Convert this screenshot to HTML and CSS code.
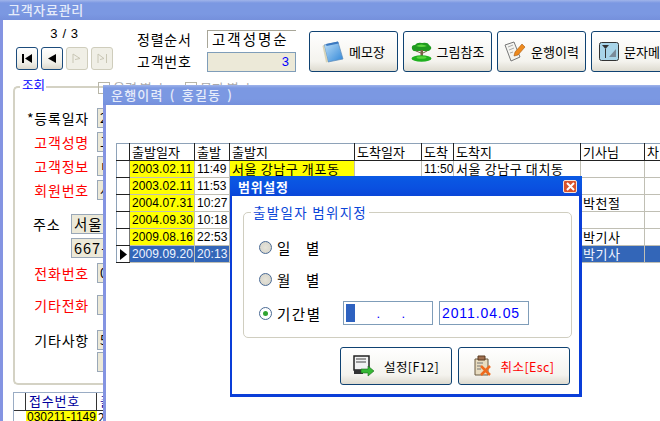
FILE: index.html
```html
<!DOCTYPE html>
<html>
<head>
	<meta charset="utf-8">
	<title>고객자료관리</title>
	<link rel="stylesheet" href="styles.css">
</head>
<body>
<div class="desk">
	<div class="main-win">
		<div class="titlebar main-title">고객자료관리</div>
		<div class="toolbar">
			<div class="nav">
				<div class="nav-count">3 / 3</div>
				<div class="nav-btns">
					<div class="nav-btn"><svg width="11" height="9" viewBox="0 0 11 9"><path d="M0 0h2v9H0zM10 0v9L3 4.500z" fill="#000"/></svg></div>
					<div class="nav-btn"><svg width="8" height="9" viewBox="0 0 8 9"><path d="M8 0v9L0 4.500z" fill="#000"/></svg></div>
					<div class="nav-btn off"><svg width="10" height="11" viewBox="0 0 10 11"><path d="M1 1v9M1 1l7 4.500-5 1" fill="none" stroke="#c8c6b4"/></svg></div>
					<div class="nav-btn off"><svg width="11" height="11" viewBox="0 0 11 11"><path d="M1 1v9M1 1l6 4.500-4 1M9.500 1v9" fill="none" stroke="#c8c6b4"/></svg></div>
				</div>
			</div>
			<div class="sort">
				<div class="sort-row"><span>정렬순서</span><div class="sort-val">고객성명순</div></div>
				<div class="sort-row"><span>고객번호</span><div class="sort-no">3</div></div>
			</div>
			<div class="tools">
				<div class="tool">
					<svg width="22" height="24" viewBox="0 0 22 24"><defs><linearGradient id="memo" x1="0" y1="0" x2="1" y2="1"><stop offset="0" stop-color="#bfe0f8"/><stop offset="1" stop-color="#2f86d8"/></linearGradient></defs><path d="M2 5l14-3 5 17-15 3z" fill="url(#memo)" stroke="#5c8ab8" stroke-width=".7"/><path d="M2 5l4 17-2 .5L0.500 6z" fill="#d8d4b8"/><path d="M4 4l12-2.500.6 2L4.500 6z" fill="#3a78c0"/></svg>
					<span>메모장</span>
				</div>
				<div class="tool">
					<svg width="21" height="20" viewBox="0 0 21 20"><path d="M1 7Q0 3 4 3 6 0 11 1q6-1 7 2 3 2 2 4-2 3-6 2H6Q2 10 1 7z" fill="#1f9a1f"/><path d="M5 4q5-3 11 0-5 2-11 0z" fill="#5ed640"/><path d="M9.500 8h2.500v7h-2.500z" fill="#7a6248"/><path d="M5 9l5 2M16 9l-4 2" stroke="#7a6248"/><ellipse cx="10.500" cy="16.500" rx="10" ry="3.300" fill="#20b020"/><ellipse cx="10.500" cy="15.500" rx="5" ry="1.300" fill="#58d83c"/></svg>
					<span>그림참조</span>
				</div>
				<div class="tool">
					<svg width="22" height="22" viewBox="0 0 22 22"><path d="M1 4l9-3 6 15-9 4z" fill="#f4f4f0" stroke="#777"/><path d="M4 6l5-2M5 9l5-2M6 12l3-1" stroke="#aaa"/><path d="M11 11l7-8 3 3-7 8-4 1z" fill="#ee8a1e" stroke="#a85a10" stroke-width=".6"/></svg>
					<span>운행이력</span>
				</div>
				<div class="tool tool-cut">
					<svg width="20" height="20" viewBox="0 0 20 20"><rect x=".5" y=".5" width="19" height="18" rx="2" fill="#a8d4e8" stroke="#333"/><path d="M3 3h7L6.500 7z M6 7h1v9H6z" fill="#333"/><path d="M10 15l7-8v8z" fill="#7a8a98"/></svg>
					<span>문자메</span>
				</div>
			</div>
		</div>
		<div class="search">
			<div class="search-top">
				<span class="legend">조회</span>
				<span class="chk"></span><span class="chk-text">음력 별 ㅣ</span>
				<span class="chk"></span><span class="chk-text">문자 별 ㅣ</span>
			</div>
			<div class="form">
				<div class="frow"><label class="lbl">*등록일자</label><span class="inp">2</span></div>
				<div class="frow"><label class="lbl red">고객성명</label><span class="inp">고</span></div>
				<div class="frow"><label class="lbl red">고객정보</label><span class="inp">ㅂ</span></div>
				<div class="frow"><label class="lbl red">회원번호</label><span class="inp">사</span></div>
				<div class="addr">
					<label class="lbl-addr">주소</label>
					<div class="addr-vals">
						<span class="inp wide">서울</span>
						<span class="inp wide">667-</span>
					</div>
				</div>
				<div class="frow r2"><label class="lbl red">전화번호</label><span class="inp">0</span></div>
				<div class="frow r3"><label class="lbl red">기타전화</label><span class="inp"></span></div>
				<div class="frow r4"><label class="lbl">기타사항</label><span class="inp">5</span></div>
				<div class="frow r5"><label class="lbl"></label><span class="inp"></span></div>
			</div>
		</div>
		<div class="mini-grid">
			<div class="mini-ind"></div>
			<div class="mini-col"><div class="mini-h">접수번호</div><div class="mini-c">030211-1149</div></div>
			<div class="mini-col2"><div class="mini-h">출</div><div class="mini-d">2</div></div>
		</div>
	</div>

	<div class="trip-win">
		<div class="titlebar trip-title">운행이력 ( 홍길동 )</div>
		<table class="grid">
			<colgroup>
				<col class="c0"><col class="c1"><col class="c2"><col class="c3"><col class="c4"><col class="c5"><col class="c6"><col class="c7"><col class="c8">
			</colgroup>
			<tr><th></th><th>출발일자</th><th>출발</th><th>출발지</th><th>도착일자</th><th>도착</th><th>도착지</th><th>기사님</th><th>차</th></tr>
			<tr><td class="ind"></td><td class="yel">2003.02.11</td><td>11:49</td><td class="yel kor">서울 강남구 개포동</td><td></td><td>11:50</td><td class="kor">서울 강남구 대치동</td><td></td><td></td></tr>
			<tr><td class="ind"></td><td class="yel">2003.02.11</td><td>11:53</td><td></td><td></td><td></td><td></td><td></td><td></td></tr>
			<tr><td class="ind"></td><td class="yel">2004.07.31</td><td>10:27</td><td></td><td></td><td></td><td></td><td class="kor">박천절</td><td></td></tr>
			<tr><td class="ind"></td><td class="yel">2004.09.30</td><td>10:18</td><td></td><td></td><td></td><td></td><td></td><td></td></tr>
			<tr><td class="ind"></td><td class="yel">2009.08.16</td><td>22:53</td><td></td><td></td><td></td><td></td><td class="kor">박기사</td><td></td></tr>
			<tr class="sel"><td class="ind"><svg width="7" height="11" viewBox="0 0 7 11"><path d="M0 0l7 5.500L0 11z" fill="#000"/></svg></td><td>2009.09.20</td><td>20:13</td><td></td><td></td><td></td><td></td><td class="kor">박기사</td><td></td></tr>
		</table>
	</div>

	<div class="dialog">
		<div class="dlg-title">
			<span>범위설정</span>
			<span class="dlg-close"><svg width="9" height="9" viewBox="0 0 9 9"><path d="M1 1l7 7M8 1L1 8" stroke="#fff" stroke-width="2"/></svg></span>
		</div>
		<div class="dlg-body">
			<div class="range">
				<span class="range-legend">출발일자 범위지정</span>
				<div class="opt"><span class="radio"></span><span class="opt-text">일&nbsp;&nbsp;&nbsp;별</span></div>
				<div class="opt"><span class="radio"></span><span class="opt-text">월&nbsp;&nbsp;&nbsp;별</span></div>
				<div class="opt opt-last">
					<span class="radio on"></span><span class="opt-text">기간별</span>
					<div class="date-from"><span class="caret"></span><span class="dots">.</span><span class="dots">.</span></div>
					<div class="date-to">2011.04.05</div>
				</div>
			</div>
			<div class="dlg-btns">
				<div class="dlg-btn">
					<svg width="22" height="22" viewBox="0 0 22 22"><path d="M1 1h15v14H1z" fill="#f2f2f2" stroke="#222" stroke-width="1.500"/><path d="M3 4h10M3 7h10" stroke="#444"/><path d="M1 15h9v4H1z" fill="#333"/><path d="M8 14h7v-3l6 5-6 5v-3H8z" fill="#35b835" stroke="#1a6a1a" stroke-width=".6"/></svg>
					<span>설정[F12]</span>
				</div>
				<div class="dlg-btn cancel">
					<svg width="18" height="22" viewBox="0 0 18 22"><path d="M1 4h13v16H1z" fill="#e8dcc0" stroke="#6a5a40"/><path d="M4 1h7v4H4z" fill="#a07050" stroke="#5a3a20"/><path d="M3 8h6M3 11h4M3 14h4" stroke="#777"/><path d="M7 11l9 9M16 11l-9 9" stroke="#ee6a1e" stroke-width="2.500"/></svg>
					<span>취소[Esc]</span>
				</div>
			</div>
		</div>
	</div>
</div>
</body>
</html>
```

FILE: styles.css
```css
* { box-sizing: border-box; }
html, body { margin: 0; padding: 0; }
body { font-family: "Noto Sans CJK KR", "Liberation Sans", sans-serif; font-size: 13px; color: #000; background: #fff; }
.desk { position: relative; width: 660px; height: 421px; overflow: hidden; }

.titlebar { height: 20px; line-height: 20px; color: #e6ecfa; font-size: 13px; font-weight: 500; letter-spacing: .7px; background: linear-gradient(#a0b4ea 0, #7b98e2 3px, #7b98e2 70%, #7590dc); }

/* main window */
.main-win { width: 660px; height: 421px; border-left: 3px solid #8494e2; }
.main-title { margin-left: -3px; padding-left: 8px; }
.toolbar { display: flex; height: 58px; }
.nav { flex: none; width: 134px; padding: 5px 0 0 13px; }
.nav-count { text-align: center; width: 97px; height: 22px; line-height: 18px; font-size: 13px; letter-spacing: .6px; font-family: "Liberation Sans", sans-serif; }
.nav-btns { display: flex; gap: 3px; }
.nav-btn { width: 22px; height: 23px; display: flex; align-items: center; justify-content: center; border: 1px solid #1c4c7c; border-radius: 3px; background: linear-gradient(#fff, #f0efe8 70%, #dcd8cc); }
.nav-btn.off { border-color: #cfcdbc; background: #f0efe6; }
.sort { flex: none; width: 172px; padding-top: 8px; }
.sort-row { display: flex; align-items: center; height: 22px; }
.sort-row span { flex: none; width: 70px; font-size: 14px; letter-spacing: .8px; }
.sort-val { width: 89px; height: 18px; line-height: 16px; border-top: 1px solid #a8a698; border-left: 1px solid #a8a698; padding-left: 4px; font-size: 14.500px; letter-spacing: 2px; white-space: nowrap; }
.sort-no { width: 89px; height: 20px; margin-top: 2px; line-height: 18px; border: 1px solid #7f9db9; background: #ece9d8; color: #00f; text-align: right; padding-right: 6px; font-family: "Liberation Sans", sans-serif; font-size: 13px; }
.tools { display: flex; gap: 5px; padding-top: 11px; }
.tool { flex: none; width: 89px; height: 41px; display: flex; align-items: center; justify-content: center; gap: 5px; border: 1px solid #0f4272; border-radius: 3px; background: linear-gradient(#fff, #f4f3ee 75%, #dedbd0); font-size: 13px; white-space: nowrap; }
.tool-cut { justify-content: flex-start; padding-left: 7px; }

/* search group */
.search { margin-left: 10px; }
.search-top { height: 14px; display: flex; align-items: center; font-size: 13px; color: #aaa; white-space: nowrap; }
.legend { flex: none; width: 26px; margin: 0 52px 0 7px; padding-left: 2px; background: #fff; color: #00f; font-size: 12.500px; line-height: 14px; }
.chk { flex: none; width: 12px; height: 12px; margin: 6px 3px 0 0; border: 1px solid #b8b6a8; }
.chk-text { width: 72px; line-height: 14px; padding-top: 6px; }
.form { height: 299px; margin-top: -6px; border: 2px solid #d4d2c4; border-right: 0; border-radius: 5px 0 0 5px; padding-top: 18px; }
.frow { display: flex; align-items: center; height: 24px; }
.lbl { flex: none; width: 82px; text-align: right; padding-right: 8px; font-size: 14px; letter-spacing: .8px; white-space: nowrap; }
.red { color: #f00; }
.inp { display: block; width: 90px; height: 20px; line-height: 18px; padding-left: 2px; border: 1px solid #9aa8b8; background: #ece9d8; font-size: 13px; overflow: hidden; }
.addr { display: flex; margin-top: 12px; height: 44px; }
.lbl-addr { flex: none; width: 56px; padding: 0 0 0 18px; font-size: 14px; letter-spacing: .8px; }
.addr-vals { display: flex; flex-direction: column; gap: 4px; }
.inp.wide { width: 60px; font-size: 14.500px; letter-spacing: 1px; }
.r2 { margin-top: 3px; }
.r3 { margin-top: 10px; height: 20px; }
.r4 { margin-top: 15px; height: 20px; }
.r5 { margin-top: 2px; height: 20px; }

.mini-grid { display: flex; margin: 7px 0 0 10px; height: 30px; border: 1px solid #9aacc4; border-bottom: 0; }
.mini-ind { width: 12px; height: 18px; border-right: 1px solid #333; border-bottom: 1px solid #333; background: #fff; }
.mini-col { flex: none; width: 71px; }
.mini-h { height: 18px; line-height: 16px; padding-left: 3px; color: #00009c; border-bottom: 1px solid #333; border-right: 1px solid #333; font-size: 13px; letter-spacing: .8px; }
.mini-c { height: 12px; line-height: 13px; background: #ff0; padding-left: 1px; font-family: "Liberation Sans", sans-serif; font-size: 12px; }
.mini-col2 { flex: none; width: 30px; }
.mini-d { padding-left: 1px; font-size: 12px; line-height: 12px; }

/* trip window */
.trip-win { position: absolute; left: 103px; top: 85px; width: 600px; height: 360px; background: #fff; border-left: 3px solid #8494e2; }
.trip-title { margin-left: -3px; padding-left: 8px; letter-spacing: 1.2px; word-spacing: 2px; }
.grid { margin: 38px 0 0 10px; border-collapse: collapse; table-layout: fixed; width: 544px; border-top: 1px solid #8ea2b8; border-left: 1px solid #8ea2b8; font-family: "Liberation Sans", "Noto Sans CJK KR", sans-serif; font-size: 12px; }
.grid th, .grid td { height: 17px; padding: 0 0 0 2px; line-height: 14px; white-space: nowrap; overflow: hidden; text-align: left; font-weight: 400; }
.grid th { border-right: 1px solid #222; border-bottom: 1px solid #222; font-size: 13px; font-family: "Noto Sans CJK KR", sans-serif; }
.grid td { border-right: 1px solid #c0bfb4; border-bottom: 1px solid #c0bfb4; letter-spacing: .1px; }
.grid td.kor { font-family: "Noto Sans CJK KR", sans-serif; font-size: 13px; letter-spacing: .6px; }
.grid td.ind { border-right: 1px solid #777; border-bottom: 1px solid #222; background: #fff; padding: 0 0 0 3px; line-height: 0; }
.c0 { width: 13px; } .c1 { width: 65px; } .c2 { width: 35px; } .c3 { width: 125px; } .c4 { width: 67px; } .c5 { width: 32px; } .c6 { width: 127px; } .c7 { width: 64px; } .c8 { width: 16px; }
.yel { background: #ff0; }
.sel td { background: #3366b8; color: #f0f4ff; }
.sel td.ind { background: #fff; color: #000; }

/* range dialog */
.dialog { position: absolute; left: 230px; top: 176px; width: 352px; height: 221px; border: 2px solid #0a3ed8; border-width: 0 3px 3px 2px; background: #fff; }
.dlg-title { margin: 0 -3px 0 -2px; height: 20px; padding: 0 5px 0 8px; display: flex; align-items: center; justify-content: space-between; color: #fff; font-size: 13px; font-weight: 700; letter-spacing: .7px; background: linear-gradient(#0a5ae4, #0a50e0 60%, #0a46d8); }
.dlg-close { width: 14px; height: 13px; display: flex; align-items: center; justify-content: center; background: #d9532c; border: 1px solid #f4e4dc; border-radius: 2px; }
.dlg-body { padding: 16px 7px 0 11px; }
.range { position: relative; height: 126px; border: 1px solid #d0cec0; border-radius: 5px; padding: 24px 0 0 15px; }
.range-legend { position: absolute; left: 7px; top: -9px; padding: 0 2px; background: #fff; color: #0a46d8; font-size: 13.500px; line-height: 16px; letter-spacing: 1.300px; white-space: nowrap; }
.opt { display: flex; align-items: center; height: 20px; margin-bottom: 12px; }
.opt-last { margin-top: 3px; height: 24px; }
.radio { flex: none; width: 13px; height: 13px; margin-right: 5px; display: flex; align-items: center; justify-content: center; border-radius: 50%; border: 1px solid #4a6a94; background: radial-gradient(#e6e4da, #d4d2c8); }
.radio.on { background: #fff; }
.radio.on::after { content: ""; width: 5px; height: 5px; border-radius: 50%; background: #31a431; }
.opt-text { flex: none; width: 66px; font-size: 14.500px; letter-spacing: 1.500px; white-space: nowrap; }
.date-from { flex: none; width: 90px; height: 24px; border: 1px solid #7f9db9; display: flex; align-items: center; }
.caret { width: 9px; height: 18px; margin-left: 2px; background: #2e62c0; }
.dots { width: 25px; text-align: right; color: #00f; font-family: "Liberation Sans", sans-serif; }
.date-to { flex: none; width: 90px; height: 24px; margin-left: 6px; border: 1px solid #7f9db9; line-height: 22px; padding-left: 2px; color: #00f; font-family: "Liberation Sans", sans-serif; font-size: 14px; letter-spacing: .9px; white-space: nowrap; }
.dlg-btns { display: flex; justify-content: flex-end; gap: 6px; margin-top: 9px; padding-right: 2px; }
.dlg-btn { width: 112px; height: 38px; display: flex; align-items: center; justify-content: center; gap: 9px; border: 1px solid #0f4272; border-radius: 3px; background: linear-gradient(#fff, #f4f3ee 75%, #dedbd0); font-size: 12.500px; letter-spacing: .4px; white-space: nowrap; }
.dlg-btn.cancel { color: #f00; }
```
